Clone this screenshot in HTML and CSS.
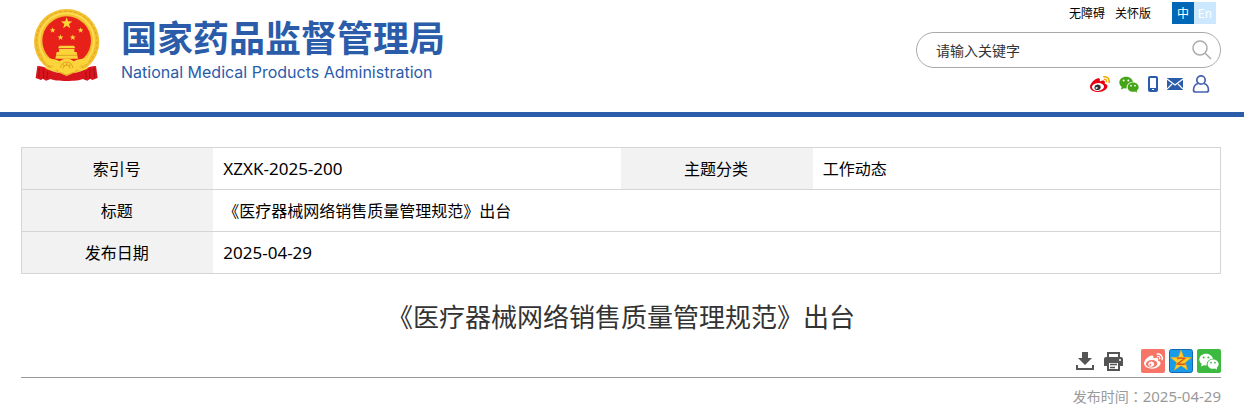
FILE: index.html
```
<!DOCTYPE html>
<html lang="zh-CN">
<head>
  <meta charset="UTF-8" />
  <meta name="viewport" content="width=device-width, initial-scale=1.0" />
  <title>《医疗器械网络销售质量管理规范》出台</title>
  <link rel="stylesheet" href="styles.css">
</head>
<body>
  <svg width="0" height="0" class="defs" aria-hidden="true">
    <symbol id="weibo-body" viewBox="0 0 512 480">
      <path d="M214.800 446.700C108.500 446.700 0 395.300 0 310.400c0-44.300 28-95.400 76.300-143.700C176 67 279.500 65.800 249.900 161c-4 13.100 12.300 5.700 12.300 6 79.500-33.600 140.500-16.800 114 51.400-3.700 9.400 1.100 10.900 8.300 13.100 135.700 42.300 34.800 215.200-169.700 215.200zm143.700-146.300c-5.400-55.700-78.500-94-163.400-85.700-84.800 8.600-148.800 60.300-143.400 116s78.500 94 163.400 85.700c84.800-8.600 148.800-60.300 143.400-116z"/>
    </symbol>
    <symbol id="weibo-eye" viewBox="0 0 512 480">
      <path fill-rule="evenodd" d="M269.400 346.100c-17.100 38.800-66.800 60-109.100 46.300-40.800-13.100-58-53.400-40.300-89.700 17.700-35.400 63.100-55.400 103.400-45.100 42 10.800 63.100 50.200 46 88.500zm-86.300-30c-12.900-5.400-30 .3-38 12.900-8.300 12.900-4.300 28 8.600 34 13.100 6 30.800.3 39.100-12.900 8-13.100 3.700-28.300-9.700-34z"/>
    </symbol>
    <symbol id="weibo-wave" viewBox="0 0 512 480">
      <path d="M407 177.600c7.600-24-13.400-46.800-37.400-41.700-22 4.800-28.800-28.100-7.100-32.800 50.100-10.900 92.300 37.100 76.500 84.800-6.800 21.200-38.800 10.800-32-10.300zM347.900 35.100c-25.900 5.600-16.800 43.700 8.300 38.300 72.300-15.200 134.800 52.800 111.700 124-7.400 24.200 29.100 37 37.400 12 31.900-99.800-55.100-195.900-157.400-174.300z"/>
    </symbol>
    <symbol id="wechat" viewBox="0 0 60 50">
      <path fill-rule="evenodd" d="M21 2C10 2 1 9 1 19c0 5 3 10 7 13l-2 8 9-4c3 1 6 1 8 1-1-11 7-20 19-20C40 8 31 2 21 2zM14 10a3 3 0 1 1 0 6a3 3 0 1 1 0-6zM28 10a3 3 0 1 1 0 6a3 3 0 1 1 0-6z"/>
      <path fill-rule="evenodd" d="M42 19c-9 0-16 6-16 14s7 14 16 14c2 0 4 0 6-1l7 4-2-6c3-3 6-6 6-11 0-8-8-14-17-14zM36 26a2.500 2.500 0 1 1 0 5a2.500 2.500 0 1 1 0-5zM48 26a2.500 2.500 0 1 1 0 5a2.500 2.500 0 1 1 0-5z"/>
    </symbol>
    <symbol id="star" viewBox="-10 -10 20 20">
      <path d="M0-10 2.400-3.300 9.500-3.100 3.900 1.300 5.900 8.100 0 4.100-5.900 8.100-3.900 1.300-9.500-3.100-2.400-3.300z"/>
    </symbol>
  </svg>

  <header class="header">
    <a class="logo" href="#">
      <svg class="emblem" viewBox="20 15 198 216" role="img" aria-label="国徽">
        <circle cx="118" cy="113" r="98" fill="#f3c030"/>
        <circle cx="118" cy="113" r="91" fill="none" stroke="#dfa523" stroke-width="3" stroke-dasharray="9 6"/>
        <circle cx="118" cy="110" r="82" fill="none" stroke="#fbdc50" stroke-width="6"/>
        <path d="M30 186c12 0 28 4 42 14 16 10 76 10 92 0 14-10 30-14 42-14l5 36-16 6-6-4-9 6-14-5c-12 8-84 8-96 0l-14 5-9-6-6 4-16-6z" fill="#d8141c"/>
        <circle cx="118" cy="110" r="73" fill="#e7211a"/>
        <g fill="#fbd43a">
          <use href="#star" x="100" y="40" width="36" height="36"/>
          <use href="#star" x="67" y="70" width="18" height="18"/>
          <use href="#star" x="151" y="70" width="18" height="18"/>
          <use href="#star" x="90" y="91" width="19" height="19"/>
          <use href="#star" x="127" y="91" width="19" height="19"/>
          <path d="M92 133l4-8h44l4 8zM95 135h46v10H95zM88 144h60l4 20H84z"/>
          <path d="M46 158c20 8 39 5 51 14 7-7 14-8 21-8s14 1 21 8c12-9 31-6 51-14l-9 20c-12 8-22 6-32 4l10 8c10 4 18 0 26 0-12 12-27 12-39 6l-9 12-19 8-19-8-9-12c-12 6-27 6-39-6 8 0 16 4 26 0l10-8c-10 2-20 4-32-4z"/>
        </g>
        <g fill="none" stroke="#d68a16" stroke-width="2">
          <path d="M86 154h64M100 192a18 18 0 0 1 36 0M107 194a11 11 0 0 1 22 0"/>
          <path d="M118 175v10M106 179l5 8M130 179l-5 8M98 205l20 8 20-8"/>
        </g>
        <g fill="none" stroke="#a50d16" stroke-width="3">
          <path d="M36 192l-2 28M48 196l1 28M61 203l-2 20M200 192l2 28M188 196l-1 28M175 203l2 20"/>
        </g>
      </svg>
      <span class="logo-text">
        <span class="logo-cn">国家药品监督管理局</span>
        <span class="logo-en">National Medical Products Administration</span>
      </span>
    </a>

    <div class="header-side">
      <div class="top-links">
        <a href="#">无障碍</a>
        <a href="#">关怀版</a>
        <div class="lang">
          <a class="on" href="#">中</a><a href="#">En</a>
        </div>
      </div>
      <form class="search">
        <input type="text" placeholder="请输入关键字" aria-label="请输入关键字" />
        <button type="button" aria-label="搜索">
          <svg width="20" height="20" viewBox="0 0 20 20" fill="none" stroke="#aaa" stroke-width="1.500"><circle cx="8" cy="8" r="7"/><path d="M13 13l6 6"/></svg>
        </button>
      </form>
      <div class="media">
        <a href="#" aria-label="微博">
          <svg width="20" height="20" viewBox="0 0 512 480"><ellipse cx="205" cy="315" rx="160" ry="110" fill="#fff"/><use href="#weibo-body" fill="#e60012"/><use href="#weibo-eye" fill="#333"/><use href="#weibo-wave" fill="#f5a800"/></svg>
        </a>
        <a href="#" aria-label="微信"><svg width="20" height="17" fill="#45a518"><use href="#wechat"/></svg></a>
        <a href="#" aria-label="手机"><svg width="10" height="16" viewBox="0 0 10 16"><path fill="#2a5caa" fill-rule="evenodd" d="M2 0h6a2 2 0 0 1 2 2v12a2 2 0 0 1-2 2H2a2 2 0 0 1-2-2V2a2 2 0 0 1 2-2zm0 2v10h6V2zm2 11v1h2v-1z"/></svg></a>
        <a href="#" aria-label="邮箱"><svg width="16" height="12" viewBox="0 0 16 12"><path fill="#2a5caa" d="M0 0h16v12H0z"/><path d="M0 1l8 6 8-6M0 11l5-5M16 11l-5-5" fill="none" stroke="#fff" stroke-width="1.200"/></svg></a>
        <a href="#" aria-label="用户"><svg width="18" height="18" viewBox="0 0 18 18" fill="none" stroke="#4662b0" stroke-width="1.700"><circle cx="9" cy="5" r="4.200"/><path d="M6 8.500C3 9.500 1.500 12 1.500 15c0 1.500.5 2 2 2h11c1.500 0 2-.5 2-2 0-3-1.500-5.500-4.500-6.500"/></svg></a>
      </div>
    </div>
  </header>

  <main class="container">
    <table class="info">
      <tr>
        <th scope="row">索引号</th>
        <td class="num">XZXK-2025-200</td>
        <th scope="row">主题分类</th>
        <td>工作动态</td>
      </tr>
      <tr>
        <th scope="row">标题</th>
        <td colspan="3">《医疗器械网络销售质量管理规范》出台</td>
      </tr>
      <tr>
        <th scope="row">发布日期</th>
        <td class="num" colspan="3">2025-04-29</td>
      </tr>
    </table>

    <h1>《医疗器械网络销售质量管理规范》出台</h1>

    <div class="tools">
      <button type="button" aria-label="下载">
        <svg width="18" height="18" viewBox="0 0 18 18" fill="#555"><path d="M6 0h6v6h4l-7 7-7-7h4zM0 13h2v3h14v-3h2v5H0z"/></svg>
      </button>
      <button type="button" aria-label="打印">
        <svg width="19" height="19" viewBox="0 0 19 19"><path d="M4 5V1h11v4" fill="none" stroke="#555" stroke-width="2"/><path d="M2 5h15a2 2 0 0 1 2 2v7h-3v-3H3v3H0V7a2 2 0 0 1 2-2z" fill="#555"/><path d="M4 10h11v8H4z" fill="#fff" stroke="#555" stroke-width="2"/><path d="M6 12.500h7M6 15.500h5" stroke="#555" stroke-width="1.500"/><circle cx="16" cy="8" r="1" fill="#fff"/></svg>
      </button>
      <div class="share">
        <a href="#" aria-label="分享到微博">
          <svg width="24" height="24" viewBox="0 0 24 24"><rect width="24" height="24" rx="2" fill="#f67567"/><g fill="#fff"><use href="#weibo-body" x="3" y="3" width="19" height="18"/><use href="#weibo-eye" x="3" y="3" width="19" height="18"/><use href="#weibo-wave" x="3" y="3" width="19" height="18"/></g></svg>
        </a>
        <a href="#" aria-label="分享到QQ空间">
          <svg width="24" height="24" viewBox="0 0 24 24"><rect x=".5" y=".5" width="23" height="23" rx="2" fill="#189be8" stroke="#1268b0"/><use href="#star" x="1" y="1" width="22" height="22" fill="#ffce25" stroke="#f6a51b" stroke-width=".5"/><path d="M8 9.500q4-1 7.500 0l-7 5.500q4 .8 8-.3" fill="none" stroke="#d9591b" stroke-width="1.500"/></svg>
        </a>
        <a href="#" aria-label="分享到微信">
          <svg width="24" height="24" viewBox="0 0 24 24"><rect width="24" height="24" rx="2" fill="#3bba3f"/><use href="#wechat" x="2" y="4" width="20" height="17" fill="#fff"/></svg>
        </a>
      </div>
    </div>
    <p class="date">发布时间<span lang="zh-Hant">：</span><span class="num">2025-04-29</span></p>
  </main>
</body>
</html>
```

FILE: styles.css
```
* {
  box-sizing: border-box;
}
body {
  margin: 0;
  font-family: "Noto Sans CJK SC", sans-serif;
  font-size: 16px;
  color: #000;
  background: #fff;
}
a {
  color: inherit;
  text-decoration: none;
}
button {
  padding: 0;
  border: 0;
  background: none;
  cursor: pointer;
}
svg {
  display: block;
}
.defs {
  position: absolute;
}

/* header */
.header {
  display: flex;
  justify-content: space-between;
  align-items: flex-start;
  padding: 2px 23px 19px 34px;
  border-bottom: 5px solid #2a5caa;
}
.logo {
  display: flex;
  gap: 21px;
  padding-top: 7px;
  color: #2a5caa;
}
.emblem {
  width: 66px;
  height: 72px;
}
.logo-text {
  display: flex;
  flex-direction: column;
}
.logo-cn {
  font-size: 36px;
  line-height: 54px;
  font-weight: bold;
}
.logo-en {
  font-family: Inter, sans-serif;
  font-size: 16px;
  line-height: 18px;
}
.header-side {
  width: 305px;
}
.top-links {
  display: flex;
  justify-content: flex-end;
  gap: 10px;
  padding-right: 5px;
  font-size: 12px;
  line-height: 22px;
}
.lang {
  display: flex;
  margin-left: 11px;
  color: #fff;
  text-align: center;
}
.lang a {
  width: 22px;
  background: #cce8ff;
}
.lang .on {
  background: #0068b7;
}
.search {
  display: flex;
  align-items: center;
  height: 36px;
  margin-top: 8px;
  padding: 0 8px 0 19px;
  border: 1px solid #aaa;
  border-radius: 18px;
}
.search input {
  flex: 1;
  min-width: 0;
  padding: 0;
  border: 0;
  outline: none;
  background: none;
  font-family: inherit;
  font-size: 14px;
}
.search input::placeholder {
  color: #333;
}
.media {
  display: flex;
  justify-content: flex-end;
  align-items: center;
  gap: 9px;
  height: 18px;
  margin-top: 7px;
  padding-right: 11px;
}

/* content */
.container {
  padding: 30px 23px 0 21px;
}
.info {
  width: 100%;
  table-layout: fixed;
  border-collapse: collapse;
  border: 1px solid #d5d5d5;
}
.info tr {
  border-bottom: 1px solid #d5d5d5;
}
.info th {
  width: 16%;
  padding: 0 2px 2px 0;
  background: #f2f2f2;
  font-weight: normal;
}
.info td {
  padding: 0 10px 2px;
}
.info th,
.info td {
  height: 42px;
  line-height: 24px;
}
.num {
  font-family: "Noto Sans", sans-serif;
  font-size: 17px;
}
.info .num {
  padding-bottom: 0;
}
h1 {
  margin: 22px 0 13px;
  font-size: 26px;
  line-height: 40px;
  font-weight: normal;
  text-align: center;
  color: #333;
}
.tools {
  display: flex;
  justify-content: flex-end;
  align-items: center;
  gap: 10px;
  padding-bottom: 4px;
  border-bottom: 1px solid #999;
}
.share {
  display: flex;
  gap: 4px;
  margin-left: 8px;
}
.date {
  margin: 7px 0;
  font-size: 14px;
  line-height: 22px;
  text-align: right;
  color: #999;
}
.date .num {
  font-size: 15px;
}
```
